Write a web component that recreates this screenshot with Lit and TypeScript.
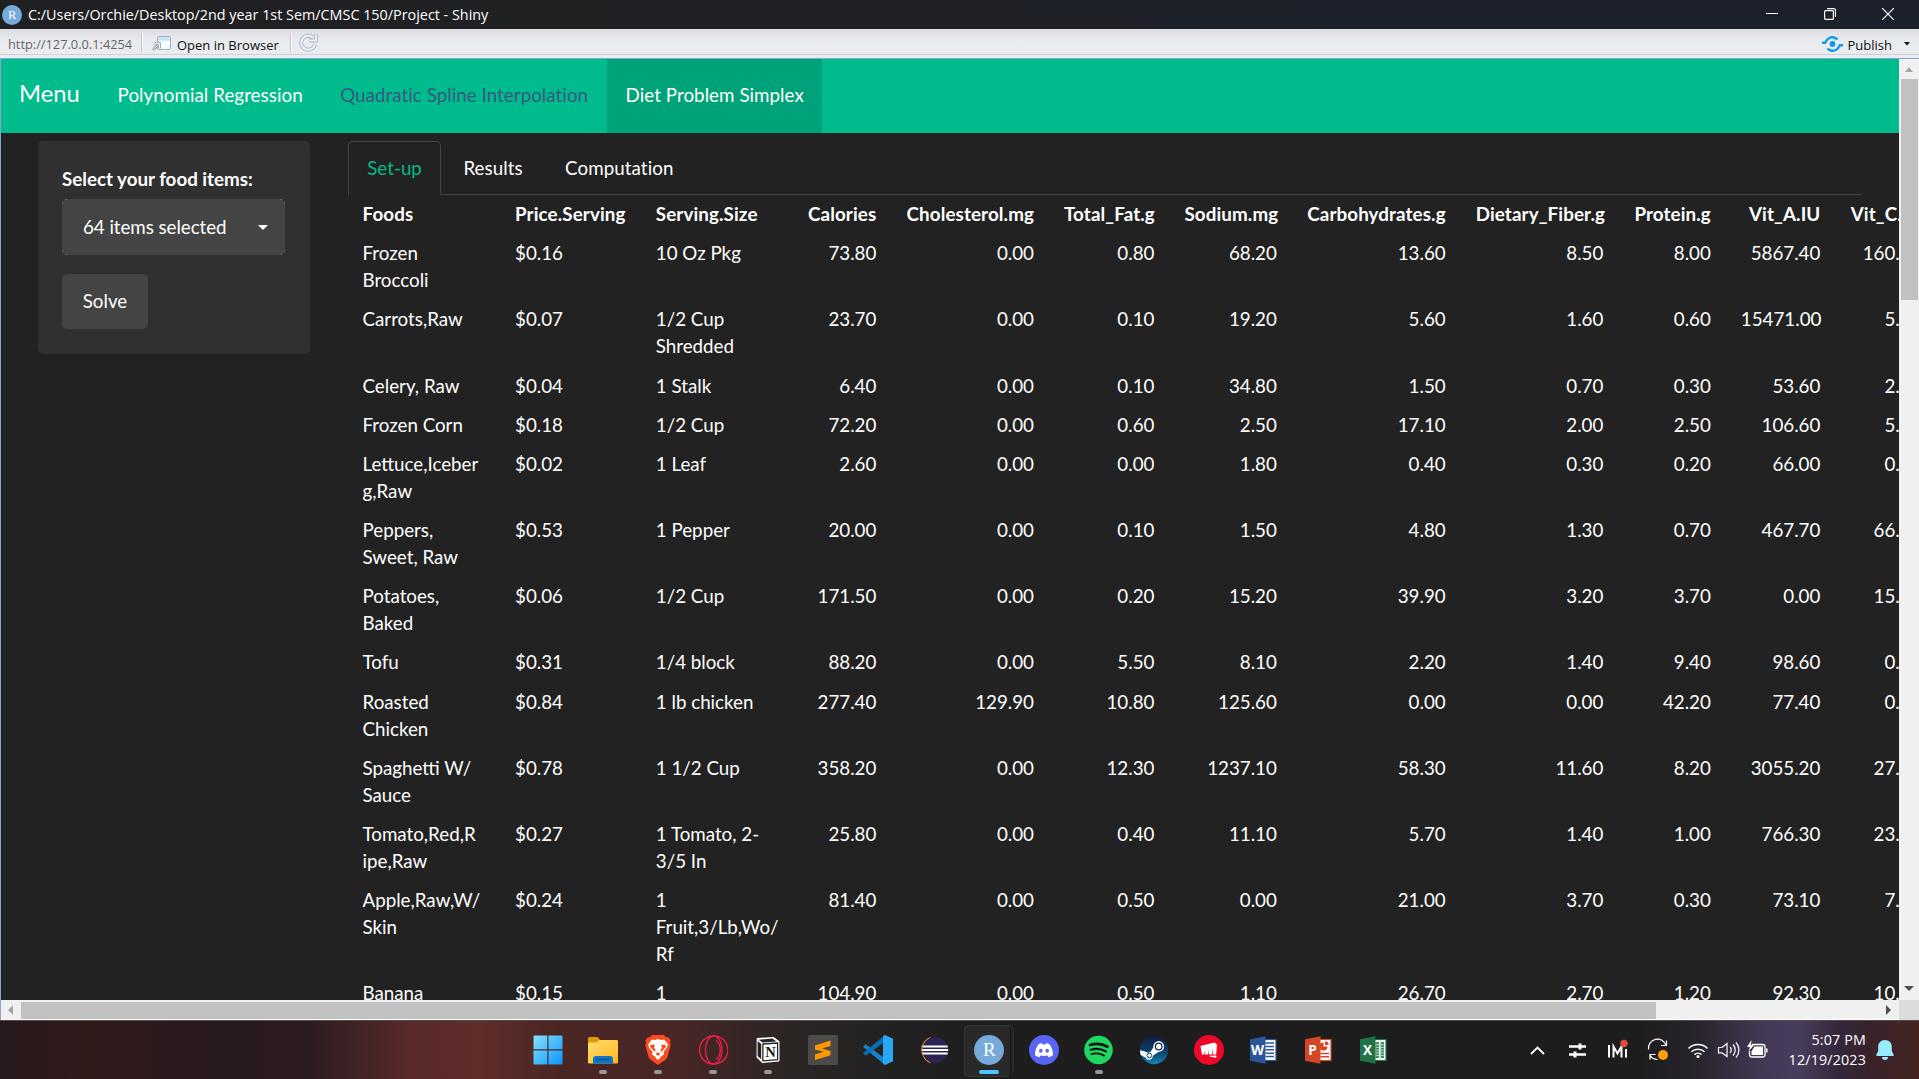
import { LitElement, html, css, svg } from "lit";
import { customElement } from "lit/decorators.js";

const HEAD = ["Foods", "Price.Serving", "Serving.Size", "Calories", "Cholesterol.mg", "Total_Fat.g", "Sodium.mg", "Carbohydrates.g", "Dietary_Fiber.g", "Protein.g", "Vit_A.IU", "Vit_C.IU"];
const ROWS: string[] = [
  "Frozen/nBroccoli|$0.16|10 Oz Pkg|73.80|0.00|0.80|68.20|13.60|8.50|8.00|5867.40|160.20",
  "Carrots,Raw|$0.07|1/2 Cup/nShredded|23.70|0.00|0.10|19.20|5.60|1.60|0.60|15471.00|5.10",
  "Celery, Raw|$0.04|1 Stalk|6.40|0.00|0.10|34.80|1.50|0.70|0.30|53.60|2.80",
  "Frozen Corn|$0.18|1/2 Cup|72.20|0.00|0.60|2.50|17.10|2.00|2.50|106.60|5.20",
  "Lettuce,Iceber/ng,Raw|$0.02|1 Leaf|2.60|0.00|0.00|1.80|0.40|0.30|0.20|66.00|0.80",
  "Peppers,/nSweet, Raw|$0.53|1 Pepper|20.00|0.00|0.10|1.50|4.80|1.30|0.70|467.70|66.10",
  "Potatoes,/nBaked|$0.06|1/2 Cup|171.50|0.00|0.20|15.20|39.90|3.20|3.70|0.00|15.60",
  "Tofu|$0.31|1/4 block|88.20|0.00|5.50|8.10|2.20|1.40|9.40|98.60|0.10",
  "Roasted/nChicken|$0.84|1 lb chicken|277.40|129.90|10.80|125.60|0.00|0.00|42.20|77.40|0.00",
  "Spaghetti W//nSauce|$0.78|1 1/2 Cup|358.20|0.00|12.30|1237.10|58.30|11.60|8.20|3055.20|27.90",
  "Tomato,Red,R/nipe,Raw|$0.27|1 Tomato, 2-/n3/5 In|25.80|0.00|0.40|11.10|5.70|1.40|1.00|766.30|23.50",
  "Apple,Raw,W//nSkin|$0.24|1/nFruit,3/Lb,Wo//nRf|81.40|0.00|0.50|0.00|21.00|3.70|0.30|73.10|7.90",
  "Banana|$0.15|1/nFruit,Wo/Skn/n&Seeds|104.90|0.00|0.50|1.10|26.70|2.70|1.20|92.30|10.40",
];

const rLogo = (s: number) => svg`<svg width=${s} height=${s} viewBox="0 0 30 30"><circle cx="15" cy="15" r="15" fill="#75aadb"/><text x="15.3" y="21.3" font-family="Liberation Serif, serif" font-size="19" fill="#fff" text-anchor="middle">R</text></svg>`;

const ICONS = {
  windows: svg`<svg width="30" height="30" viewBox="0 0 30 30"><defs><linearGradient id="w" x1="0" y1="0" x2="1" y2="1" gradientUnits="objectBoundingBox"><stop offset="0" stop-color="#86e3ff"/><stop offset="1" stop-color="#0a94fb"/></linearGradient></defs><path fill="url(#w)" d="M1.5.5H14.3V14.3H.5V1.5a1 1 0 0 1 1-1zM15.5.5H28.500a1 1 0 0 1 1 1V14.3H15.500zM.5 15.500H14.3V29.500H1.500a1 1 0 0 1-1-1zM15.500 15.500H29.500V28.500a1 1 0 0 1-1 1H15.500z"/></svg>`,
  folder: svg`<svg width="30" height="30" viewBox="0 0 30 30"><defs><linearGradient id="f" x1="0" y1="0" x2="1" y2="1"><stop offset="0" stop-color="#ffdd72"/><stop offset="1" stop-color="#fdb91a"/></linearGradient></defs><path d="M0 3.500a1.500 1.500 0 0 1 1.500-1.500H9.500l3 3.200V10H0z" fill="#e09a05"/><path d="M0 7.500H8l3.500-2.500H29a1 1 0 0 1 1 1V27.500a1 1 0 0 1-1 1H1a1 1 0 0 1-1-1z" fill="url(#f)"/><path d="M5 28.500V24a3 3 0 0 1 3-3H22a3 3 0 0 1 3 3v4.500z" fill="#0b76c9"/><path d="M8.500 24.500H21.500" stroke="#064a86" stroke-width="1.300"/></svg>`,
  brave: svg`<svg width="30" height="30" viewBox="0 0 30 30"><path d="M9 0H21l2.300 2.600 2-.3 2.400 3-.9 2.300.9 2.400-3 11.300c-.5 1.800-1.500 3-3 4L15 30 8.300 25.300c-1.500-1-2.500-2.200-3-4L2.300 10l.9-2.400-.9-2.300 2.400-3 2 .3z" fill="#fb4b1d"/><path d="M9 4.500l3 .6L15 4l3 1.100 3-.6 3.800 4.500-.7 3.500-3.600 4.500.7 2.200L18 21.500l-1.200 2L15 25l-1.800-1.500-1.200-2-3.200-2.300.7-2.200L5.900 12.500 5.200 9z" fill="#fff"/><path d="M8 9.500l4 .5-1 2.500 1.500 2.500-.5 2-2.500-2.500L7 12zM22 9.500l-4 .5 1 2.500-1.500 2.500.5 2 2.500-2.500L23 12zM12.500 18.500l2.500-1 2.500 1-2.500 2.500z" fill="#fb4b1d"/></svg>`,
  opera: svg`<svg width="30" height="30" viewBox="-0.7 0 30 30" fill="none" stroke="#f01f4b" stroke-width="1.300"><circle cx="15" cy="15" r="14.200"/><ellipse cx="15" cy="15" rx="8.300" ry="14"/><path d="M17 5.500c6 3 6 16 0 19"/></svg>`,
  notion: svg`<svg width="30" height="30" viewBox="-0.6 0 30 30"><path d="M4 4L19.500 2.800l5.500 4V25.500L9 27 3.800 22z" fill="#fff" stroke="#fff" stroke-width="1.800" stroke-linejoin="round"/><path d="M5 4.700L19 3.600 22.800 6.500 9 7.500zM4 6L7.600 9V24.200L4 21z" fill="#252525"/><path d="M9.300 9L24 8V24.700L9.300 25.900z" fill="#fff" stroke="#252525" stroke-width="1.300"/><text x="16.800" y="22.300" text-anchor="middle" font-family="Liberation Serif, serif" font-weight="bold" font-size="14.500" fill="#1c1c1c">N</text></svg>`,
  sublime: svg`<svg width="30" height="30" viewBox="0 0 30 30"><rect width="30" height="30" rx="1.500" fill="#4b4b4b"/><path d="M7 10.500L22.500 5.500V11L14 13.500l8.500 2.500V20.200L7 25V19.500l8.500-2.700L7 14.500z" fill="#ff9800"/></svg>`,
  vscode: svg`<svg width="30" height="30" viewBox="0 0 30 30"><path d="M22 30L0 11.800l2.800-2.500L22 23.500z" fill="#1385ca"/><path d="M22 0L0 18.200l2.800 2.500L22 6.500z" fill="#0b6db1"/><path d="M22 0l8 3.700V26.300L22 30l-2-1.200V1.200z" fill="#29a8f2"/></svg>`,
  eclipse: svg`<svg width="30" height="30" viewBox="0.5 0 30 30"><path d="M13 1.500A14 14 0 0 0 13 28.500 17 17 0 0 1 13 1.500z" fill="#f7941e"/><circle cx="16.700" cy="15" r="13" fill="#2c2255"/><path d="M4 11.500H29.200M3.700 15H29.700M4 18.500H29.200" stroke="#fff" stroke-width="2"/></svg>`,
  discord: svg`<svg width="30" height="30" viewBox="0 0 30 30"><circle cx="15" cy="15" r="15" fill="#5865f2"/><path d="M9.500 9.300c1.500-.7 2.500-.9 3.500-1l.6 1.100h2.800l.6-1.100c1 .1 2 .3 3.500 1 2.700 3.700 3.700 7.500 3.400 11-1.600 1.100-2.900 1.600-4.300 2l-1.100-1.900c-2 .5-5 .5-7 0l-1.100 1.900c-1.400-.4-2.700-.9-4.300-2-.3-3.500.7-7.300 3.400-11z" fill="#fff"/><ellipse cx="11.800" cy="15.800" rx="1.800" ry="2" fill="#5865f2"/><ellipse cx="18.200" cy="15.800" rx="1.800" ry="2" fill="#5865f2"/></svg>`,
  spotify: svg`<svg width="30" height="30" viewBox="0 0 30 30"><circle cx="14.500" cy="15" r="14.300" fill="#1ed760"/><g fill="none" stroke="#111" stroke-linecap="round"><path d="M6 10c6-1.700 12.500-1.100 17.500 1.700" stroke-width="2.700"/><path d="M6.700 14.700c5.200-1.500 10.800-.9 15.200 1.700" stroke-width="2.200"/><path d="M7.300 19.100c4.500-1.200 9-.7 12.800 1.500" stroke-width="1.800"/></g></svg>`,
  steam: svg`<svg width="30" height="30" viewBox="0 0 30 30"><defs><linearGradient id="s" x1="0" y1="0" x2="0" y2="1"><stop offset="0" stop-color="#131a40"/><stop offset=".6" stop-color="#0c4472"/><stop offset="1" stop-color="#1387b8"/></linearGradient></defs><circle cx="15" cy="15" r="14.200" fill="url(#s)"/><path d="M.8 15.500c2-.5 5.500 1 8 2.300l2.500-.8 3.200-4.700 5.300 4.500-6 4c0 4.500-5.500 5.500-7.300 1.700L1.700 20z" fill="#fff"/><circle cx="19.700" cy="11.500" r="5.400" fill="#fff"/><circle cx="19.700" cy="11.500" r="3.300" fill="#fff" stroke="#15264e" stroke-width="1.300"/><circle cx="10.300" cy="20.500" r="2.300" fill="none" stroke="#0c4472" stroke-width="1"/></svg>`,
  riot: svg`<svg width="30" height="30" viewBox="0 0 30 30"><circle cx="15" cy="15" r="15" fill="#ec0928"/><path d="M6.500 11L20.500 7.500l2.500 2-.8 10H19l-.2-6-.8 6H14.800l-.5-5.200-.3 5.200H11l-.8-4.500v4.500H8z" fill="#fff"/><path d="M15.500 20.700l7-.2-.3 2.200-6.300-.9z" fill="#fff"/></svg>`,
};

const office = (c: string, d: string, letter: string, body: unknown) => svg`<svg width="30" height="30" viewBox="0.5 0 30 30"><rect x="14.500" y="4.500" width="13" height="21" fill="#fff" stroke=${c} stroke-width="1.200"/>${body}<path d="M1.500 4.200L17 1.300V28.700L1.500 25.800z" fill=${d}/><text x="9" y="20" text-anchor="middle" font-family="Open Sans, sans-serif" font-weight="bold" font-size="13.500" fill="#fff">${letter}</text></svg>`;
const word = office("#2b579a", "#2b579a", "W", svg`<path d="M17 8H25.500M17 11.400H25.500M17 14.800H25.500M17 18.200H25.500M17 21.600H25.500" stroke="#2b579a" stroke-width="1.500"/>`);
const ppt = office("#d24726", "#d24726", "P", svg`<path d="M20 7.500a4 4 0 1 0 4 4H20z" fill="#d24726"/><path d="M21.500 6.200a4 4 0 0 1 3.800 3.800h-3.800z" fill="#d24726"/><path d="M17 18.500H25.500M17 21.800H25.500" stroke="#d24726" stroke-width="1.500"/>`);
const excel = office("#217346", "#217346", "X", svg`<path d="M17 7h3.500v16H17zM22 7h3.500v16H22z" fill="#3b9462"/><path d="M17 9.700H26M17 12.400H26M17 15.100H26M17 17.800H26M17 20.500H26" stroke="#fff" stroke-width=".6"/>`);

const TASKS: [unknown, string][] = [
  [ICONS.windows, ""], [ICONS.folder, "run"], [ICONS.brave, "run"], [ICONS.opera, "run"], [ICONS.notion, "run"], [ICONS.sublime, ""], [ICONS.vscode, ""], [ICONS.eclipse, ""],
  [rLogo(30), "current"], [ICONS.discord, ""], [ICONS.spotify, "run"], [ICONS.steam, ""], [ICONS.riot, ""], [word, ""], [ppt, ""], [excel, ""],
];

@customElement("app-root")
export class AppRoot extends LitElement {
  static styles = css`
    :host { display: flex; flex-direction: column; width: 1919px; height: 1079px; overflow: hidden; background: #222; color: #fff; font-family: "Open Sans", sans-serif; }
    * { box-sizing: border-box; }
    svg { display: block; flex: none; }
    .title { height: 29px; flex: none; display: flex; align-items: center; padding: 0 25px 0 2px; background: linear-gradient(90deg, #202022, #202124 40%, #1b202b 75%, #1c202b); font-size: 14.37px; }
    .path { margin-left: 6px; flex: 1; white-space: nowrap; margin-top: -1px; }
    .winbtns { display: flex; gap: 46px; align-items: center; margin-top: -1px; }
    .tools { height: 30px; flex: none; display: flex; align-items: center; padding: 0 9px 0 8px; background: linear-gradient(#dddde2, #e9eaee 40%, #ebecf0 85%); border-bottom: 1px solid #86a5d8; box-shadow: inset 0 -3px #ebedf3, inset 0 -4px #cfd1da; font-size: 13px; color: #111; white-space: nowrap; }
    .url { color: #666; width: 133px; font-size: 12.800px; }
    .sep { width: 2px; height: 19px; margin-top: -3px; background: #c3c4c8; border-right: 1px solid #fff; }
    .open { display: flex; align-items: center; gap: 6px; width: 147px; padding-left: 9px; }
    .open span, .publish span { padding-top: 2px; }
    .reload { margin-left: 7px; margin-top: -3px; flex: 1; }
    .publish { display: flex; align-items: center; gap: 5px; }
    .drop { margin-left: 7px; }
    .viewer { flex: none; height: 961px; display: grid; grid-template-columns: 1898px 20px; grid-template-rows: 941px 20px; border-left: 1px solid #86a5d8; }
    .page { overflow: hidden; background: #222; font-family: Lato, "Liberation Sans", sans-serif; font-size: 18.75px; line-height: 26.79px; }
    .navbar { height: 74px; background: #00bc8c; display: flex; align-items: center; white-space: nowrap; }
    .brand { font-size: 23.75px; width: 97.500px; padding-left: 18px; padding-bottom: 6px; }
    .link { height: 74px; padding: 22.500px 18.4px 0 19.1px; letter-spacing: 0.05px; }
    .link.dim { color: #375a7f; }
    .link.active { background: #00a379; }
    .main { display: flex; padding: 8px 0 0 37px; align-items: flex-start; }
    .well { width: 272px; height: 213px; flex: none; border-radius: 5px; background: #303030; padding: 25px 25px 0 24px; }
    .label { font-weight: bold; height: 33px; }
    .select { height: 56px; width: 223px; border-radius: 5px; background: linear-gradient(#444, #444) center / 213px 56px no-repeat, linear-gradient(#444, #444) center / 223px 46px no-repeat, radial-gradient(#444, #444) center / 221px 54px no-repeat, #666; display: flex; align-items: center; justify-content: space-between; padding: 0 17px 0 21px; letter-spacing: -0.05px; }
    .caret { border: 5px solid transparent; border-top-color: #fff; border-bottom: 0; }
    .solve { margin-top: 19px; width: 86px; height: 55px; background: #444; border-radius: 5px; display: flex; align-items: center; justify-content: center; }
    .panel { margin-left: 37.500px; flex: none; width: 1590px; }
    .tabs { display: flex; width: 1513px; height: 54px; border-bottom: 1px solid #444; }
    .tab { height: 54px; padding: 12.500px 18.75px 0 18.75px; border: 1px solid transparent; border-bottom: 0; margin-right: 2.800px; letter-spacing: 0.07px; }
    .tab.active { color: #00bc8c; border-color: #444; border-radius: 5px 5px 0 0; background: #222; padding-right: 18px; letter-spacing: 0; }
    table { table-layout: fixed; width: 1589px; border-collapse: collapse; border-spacing: 0; white-space: nowrap; }
    th, td { padding: 6.250px 15px; text-align: right; vertical-align: top; font-weight: normal; }
    th { font-weight: bold; padding-bottom: 6.100px; letter-spacing: 0.12px; }
    th:nth-child(-n + 3), td:nth-child(-n + 3) { text-align: left; }
    .vbar { background: #f0f0f0; display: flex; flex-direction: column; align-items: center; padding-top: 8px; }
    .up { border: 4.500px solid transparent; border-bottom: 5px solid #a3a3a3; border-top: 0; }
    .vthumb { width: 17px; height: 221px; margin-top: 7px; background: #c1c1c1; }
    .down { margin-top: auto; margin-bottom: 9px; border: 5px solid transparent; border-top-color: #505050; border-bottom: 0; }
    .hbar { background: #f0f0f0; display: flex; align-items: center; padding: 1px 8px 0 7px; border-bottom: 1px solid #fff; }
    .left { border: 5px solid transparent; border-right-color: #a3a3a3; border-left: 0; }
    .hthumb { width: 1635px; height: 17px; margin-left: 8px; background: #c1c1c1; }
    .right { margin-left: auto; border: 5px solid transparent; border-left-color: #505050; border-right: 0; }
    .corner { background: #dcdcdc; }
    .taskbar { height: 59px; flex: none; display: flex; justify-content: space-between; border-top: 1px solid #514a49; background: linear-gradient(90deg, #26191c 0, #321a1a 90px, #27191f 220px, #2d1c1f 310px, #592a29 410px, #5f2d2a 480px, #4a2623 560px, #482626 680px, #302625 760px, #222222 880px, #1d1d1d 1000px, #1e1d1e 1640px, #29242e 1700px, #423854 1760px, #483d5b 1800px, #34263a 1840px, #39232a 1870px, #442423 1919px); }
    .apps { display: flex; padding-left: 520px; }
    .app { width: 55.080px; height: 58px; padding: 14px 0 0 13px; position: relative; }
    .stack { position: absolute; left: 3.400px; top: 4px; width: 50px; height: 50px; border-radius: 5px; border: 1px solid #303030; background: #242424; }
    .stack::before { content: ""; display: block; width: 45px; height: 50px; margin: -1px; border-radius: 5px; border: 1px solid #363636; border-right-color: #161616; background: #292929; }
    .app.current::after, .app.run::after { content: ""; position: absolute; left: 24px; top: 49px; width: 8px; height: 4px; border-radius: 2px; background: #9c9796; }
    .app.current::after { left: 18.400px; width: 20px; background: #4cc2ff; }
    .app svg { position: relative; }
    .tray { display: flex; align-items: center; padding-right: 25px; }
    .battery { margin-left: 4px; }
    .clock { width: 86px; text-align: right; font-size: 14.3px; letter-spacing: 0.15px; line-height: 20px; margin: 0 10px 0 12px; white-space: nowrap; }
  `;

  private cell(t: string) {
    return t.split("/n").map((p, i) => (i ? html`<br />${p}` : p));
  }

  render() {
    const cols = [152.5, 140.7, 151.3, 99.2, 157.6, 120.4, 122.4, 168.8, 157.6, 107.5, 109.5, 101];
    return html`
      <div class="title">
        ${rLogo(20)}
        <div class="path">C:/Users/Orchie/Desktop/2nd year 1st Sem/CMSC 150/Project - Shiny</div>
        <div class="winbtns">
          <svg width="12" height="12"><path d="M0 5.500H12" stroke="#fff" /></svg>
          <svg width="12" height="12" fill="none" stroke="#fff" stroke-width="1.200"><rect x=".6" y="2.600" width="8.800" height="8.800" rx="1" /><path d="M3 .6H9.500a2 2 0 0 1 2 2V9" /></svg>
          <svg width="12" height="12" stroke="#fff" stroke-width="1.200"><path d="M0 0L12 12M12 0L0 12" /></svg>
        </div>
      </div>
      <div class="tools">
        <div class="url">http://127.0.0.1:4254</div>
        <div class="sep"></div>
        <div class="open">
          <svg width="19" height="15" viewBox="0 0 19 15"><rect x="5.500" y=".5" width="13" height="13" rx="1.500" fill="#f7fafc" stroke="#9bb0c4" /><path d="M6 1H18V4.500H6z" fill="#bfe2f5" /><path d="M1 14l5-5M2.500 7.500H7.500V12.500" stroke="#8a9aac" stroke-width="2.600" fill="none" /><path d="M1 14l5-5M2.500 7.500H7.500V12.500" stroke="#fff" fill="none" /></svg>
          <span>Open in Browser</span>
        </div>
        <div class="sep"></div>
        <div class="reload"><svg width="19" height="19" viewBox="0 0 19 19" fill="none"><path d="M14.500 5A7 7 0 1 0 16 11.500M17 1V7.500H10.500" stroke="#a9b6c8" stroke-width="4" /><path d="M14.500 5A7 7 0 1 0 16 11.500M17 1.500V7.500H11" stroke="#eaf1fa" stroke-width="2.200" /></svg></div>
        <div class="publish">
          <svg width="21" height="16" viewBox="0 0 21 16" fill="none" stroke="#0e9ae9" stroke-width="2.400"><circle cx="10.500" cy="8" r="2.900" fill="#0e9ae9" stroke="none" /><path d="M0 6.800H3.200C5 2.700 8.500.6 12 1.500c1.500.4 2.500 1 3.500 2M21 9.200H17.800C16 13.300 12.500 15.400 9 14.500c-1.500-.4-2.500-1-3.500-2" /></svg>
          <span>Publish</span>
          <svg class="drop" width="6" height="4"><path d="M0 0H6L3 3.500z" fill="#111" /></svg>
        </div>
      </div>
      <div class="viewer">
        <div class="page">
          <div class="navbar">
            <div class="brand">Menu</div>
            <div class="link">Polynomial Regression</div>
            <div class="link dim">Quadratic Spline Interpolation</div>
            <div class="link active">Diet Problem Simplex</div>
          </div>
          <div class="main">
            <div class="well">
              <div class="label">Select your food items:</div>
              <div class="select"><span>64 items selected</span><span class="caret"></span></div>
              <div class="solve">Solve</div>
            </div>
            <div class="panel">
              <div class="tabs"><div class="tab active">Set-up</div><div class="tab">Results</div><div class="tab">Computation</div></div>
              <table>
                <colgroup>${cols.map((w) => html`<col style="width:${w}px" />`)}</colgroup>
                <thead><tr>${HEAD.map((h) => html`<th>${h}</th>`)}</tr></thead>
                <tbody>${ROWS.map((r) => html`<tr>${r.split("|").map((c) => html`<td>${this.cell(c)}</td>`)}</tr>`)}</tbody>
              </table>
            </div>
          </div>
        </div>
        <div class="vbar"><div class="up"></div><div class="vthumb"></div><div class="down"></div></div>
        <div class="hbar"><div class="left"></div><div class="hthumb"></div><div class="right"></div></div>
        <div class="corner"></div>
      </div>
      <div class="taskbar">
        <div class="apps">${TASKS.map(([icon, state]) => html`<div class="app ${state}">${state === "current" ? html`<div class="stack"></div>` : ""}${icon}</div>`)}</div>
        <div class="tray">
          <svg width="212" height="30" viewBox="0 0 212 30" fill="none" stroke="#fff" stroke-width="1.800">
            <path d="M1 19L7.500 12.500L14 19" />
            <path d="M39 11.500H56M39 19.500H56" stroke-width="2.500" /><path d="M50 8.500v6M45 16.500v6" stroke-width="3" />
            <path d="M79 10V22.500M83.500 22.500V11.500l4 7 4-7V22.500M96 14V22.500" stroke-width="2" />
            <circle cx="94" cy="8.500" r="3.700" fill="#e04a3f" stroke="none" />
            <path d="M118.500 14.500a9 9 0 0 1 17.500-4M136.500 5.500V10.500H131M120 24.500V19.500H125.500M119.500 19.500a9 9 0 0 0 8 5" stroke-width="1.200" />
            <circle cx="133" cy="20" r="5" fill="#ff9f0a" stroke="none" />
            <path d="M158.500 13.500a13.500 13.500 0 0 1 19 0M161.500 16.800a9.300 9.300 0 0 1 13 0M164.500 19.600a5 5 0 0 1 7 0" stroke-width="1.500" /><circle cx="168" cy="21.500" r="1.500" fill="#fff" stroke="none" />
            <path d="M188.500 12.500H192L197 8.500V21.500L192 17.800H188.500zM200 12a4.500 4.500 0 0 1 0 6M203 9.500a8 8 0 0 1 0 11M206 7.500a11 11 0 0 1 0 15" stroke-width="1.200" />
          </svg>
          <svg class="battery" width="22" height="20" viewBox="0 0 22 20"><path d="M6 4.500H16.500a2.500 2.500 0 0 1 2.500 2.500V14.500a2.500 2.500 0 0 1-2.500 2.500H6a2.500 2.500 0 0 1-2.500-2.500V11" fill="none" stroke="#fff" stroke-width="1.300" /><path d="M8.500 6.500H17V15H5.500V11.500zM20 8.500h1.500v4H20zM5.500 0L1 7H4L2.500 11.500 8 5H5z" fill="#fff" /></svg>
          <div class="clock">5:07 PM<br />12/19/2023</div>
          <svg width="18" height="20" viewBox="0 0 18 20"><path d="M9 0c4 0 6.800 2.800 6.800 6.800v4.200l1.800 3.500c.3.800-.1 1.500-1 1.500H1.400c-.9 0-1.300-.7-1-1.500L2.200 11V6.800C2.200 2.800 5 0 9 0zM6 17H12a3 3 0 0 1-6 0z" fill="#99ebff" /></svg>
        </div>
      </div>
    `;
  }
}
